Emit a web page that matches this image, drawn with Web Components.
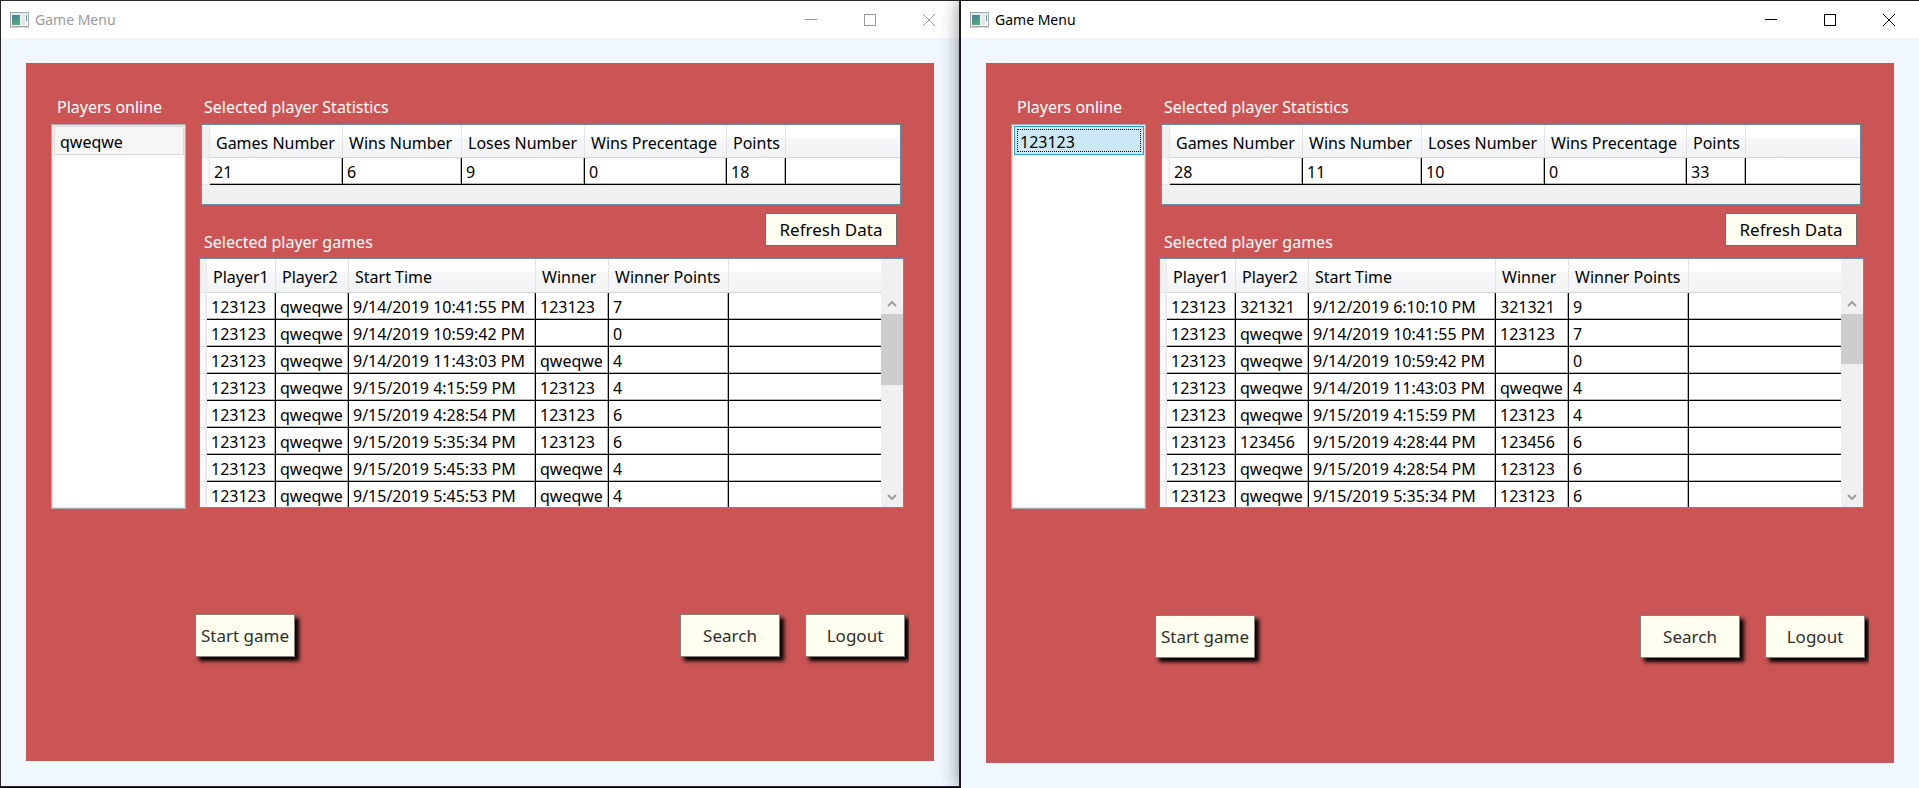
<!DOCTYPE html>
<html lang="en">
<head>
<meta charset="utf-8">
<title>Game Menu</title>
<style>
  html, body { margin: 0; }
  body {
    display: flex;
    min-height: 100vh;
    background: #000;
    color: #000;
    font: 16px/24px "Noto Sans", "Open Sans", sans-serif;
  }
</style>
</head>
<body>
<app-window heading="Game Menu"><game-menu session="first"></game-menu></app-window>
<app-window heading="Game Menu" active><game-menu session="second"></game-menu></app-window>

<script>
const sessions = {
  first: {
    players: ["qweqwe"],
    focused: false,
    stats: ["21", "6", "9", "0", "18"],
    thumb: 71,
    games: [
      ["123123", "qweqwe", "9/14/2019 10:41:55 PM", "123123", "7"],
      ["123123", "qweqwe", "9/14/2019 10:59:42 PM", "", "0"],
      ["123123", "qweqwe", "9/14/2019 11:43:03 PM", "qweqwe", "4"],
      ["123123", "qweqwe", "9/15/2019 4:15:59 PM", "123123", "4"],
      ["123123", "qweqwe", "9/15/2019 4:28:54 PM", "123123", "6"],
      ["123123", "qweqwe", "9/15/2019 5:35:34 PM", "123123", "6"],
      ["123123", "qweqwe", "9/15/2019 5:45:33 PM", "qweqwe", "4"],
      ["123123", "qweqwe", "9/15/2019 5:45:53 PM", "qweqwe", "4"]
    ]
  },
  second: {
    players: ["123123"],
    focused: true,
    stats: ["28", "11", "10", "0", "33"],
    thumb: 50,
    games: [
      ["123123", "321321", "9/12/2019 6:10:10 PM", "321321", "9"],
      ["123123", "qweqwe", "9/14/2019 10:41:55 PM", "123123", "7"],
      ["123123", "qweqwe", "9/14/2019 10:59:42 PM", "", "0"],
      ["123123", "qweqwe", "9/14/2019 11:43:03 PM", "qweqwe", "4"],
      ["123123", "qweqwe", "9/15/2019 4:15:59 PM", "123123", "4"],
      ["123123", "123456", "9/15/2019 4:28:44 PM", "123456", "6"],
      ["123123", "qweqwe", "9/15/2019 4:28:54 PM", "123123", "6"],
      ["123123", "qweqwe", "9/15/2019 5:35:34 PM", "123123", "6"]
    ]
  }
};

/* Desktop window: title bar, caption buttons and a client area */
class AppWindow extends HTMLElement {
  connectedCallback() {
    this.attachShadow({ mode: "open" }).innerHTML = `
      <style>
        :host {
          display: flex; flex-direction: column; flex: 1 1 0; min-width: 0;
          box-sizing: content-box;
          margin-bottom: 1px;
          border: 1px solid #2b282c;
          background: #f0f7ff;
          --ink: #999;
        }
        :host([active]) {
          --ink: #000;
          margin-bottom: 0;
          border-color: #1a171b; border-right: 0; border-bottom: 0;
          box-shadow: 0 0 18px rgba(0, 0, 0, .5);
        }
        header { display: flex; align-items: center; height: 37px; padding-right: 1px; background: #fff; color: var(--ink); }
        .icon { margin: 0 6px 0 9px; }
        h1 { margin: 0; flex: 1; font-size: 14px; line-height: 20px; font-weight: 400; }
        button {
          display: flex; align-items: center; justify-content: center;
          width: 59px; height: 36px; padding: 0; border: 0; background: none; color: inherit;
        }
        button svg { fill: none; stroke: currentColor; }
        main { display: flex; flex: 1; padding: 25px; }
        ::slotted(*) { flex: 1; min-width: 0; }
      </style>
      <header>
        <svg class="icon" width="19" height="16" viewBox="0 0 19 16" aria-hidden="true">
          <defs><linearGradient id="g" x2="0.6" y2="1"><stop stop-color="#4478a0"/><stop offset="1" stop-color="#54ad78"/></linearGradient></defs>
          <rect x=".5" y=".5" width="18" height="14" fill="#f3f4f5" stroke="#a3a9ae"/>
          <path d="M0 15.5h19" stroke="#d4d6d8"/>
          <path d="M1 1.5h17" stroke="#dfe2e4"/>
          <rect x="2" y="3" width="8" height="10" fill="url(#g)"/>
          <rect x="11" y="3" width="4" height="10" fill="#e6e8e9"/>
          <path d="M16.5 3v6" stroke="#5d9c9b"/>
        </svg>
        <h1></h1>
        <button type="button" aria-label="Minimize"><svg width="12" height="12"><path d="M0 5.5h12"/></svg></button>
        <button type="button" aria-label="Maximize"><svg width="12" height="12"><rect x=".5" y=".5" width="11" height="11"/></svg></button>
        <button type="button" aria-label="Close"><svg width="12" height="12"><path d="M0 0l12 12M12 0L0 12"/></svg></button>
      </header>
      <main><slot></slot></main>`;
    this.shadowRoot.querySelector("h1").textContent = this.getAttribute("heading");
  }
}

/* Push button; the raised kind is larger and casts a shadow */
class PushButton extends HTMLElement {
  connectedCallback() {
    this.attachShadow({ mode: "open" }).innerHTML = `
      <style>
        :host { display: block; }
        button {
          display: block; box-sizing: border-box; width: 132px; height: 33px; padding: 0;
          border: 1px solid #707070; background: #fffff0; color: #000;
          font: inherit; font-size: 17px; white-space: nowrap;
        }
        :host([raised]) button {
          width: 100px; height: 43px; padding-top: 2px; color: #2e2e2c;
          border-color: #85807a;
          box-shadow: 4px 4px 4px #000;
        }
      </style>
      <button type="button"><slot></slot></button>`;
  }
}

/* List of online players */
class PlayerList extends HTMLElement {
  set players(names) {
    this.attachShadow({ mode: "open" }).innerHTML = `
      <style>
        :host { display: block; }
        ul {
          box-sizing: border-box; height: 100%; margin: 0; padding: 1px 1px 1px 2px; list-style: none;
          border: 1px solid #abadb3; background: #fff; box-shadow: inset 0 0 0 1px #efdede;
        }
        li {
          box-sizing: border-box; height: 29px; padding: 1px 5px 0;
          border: 1px solid #dadada; background: #f6f6f6; line-height: 28px;
        }
        :host([focused]) li {
          border-color: #26a0da; background: #cbe8f6;
          outline: 1px dotted #000; outline-offset: -4px;
        }
      </style>
      <ul role="listbox" aria-label="Players online">${
        names.map(n => `<li role="option" aria-selected="true">${n}</li>`).join("")
      }</ul>`;
  }
}

/* Data grid with row headers, a filler column and an optional scroll bar */
class DataGrid extends HTMLElement {
  set data({ label, columns, rows, thumb }) {
    this.attachShadow({ mode: "open" }).innerHTML = `
      <style>
        :host {
          display: flex; align-items: stretch; box-sizing: border-box; overflow: hidden;
          border: 1px solid #688caf; background: #f0f0f0;
        }
        .view { flex: 1; min-width: 0; }
        table { width: 100%; table-layout: fixed; border-collapse: separate; border-spacing: 0; }
        th, td { box-sizing: border-box; padding: 0; text-align: left; font-weight: 400; white-space: nowrap; }
        thead th, thead td {
          height: var(--head, 33px); line-height: 26px; padding: 3px 0 0 6px;
          border-bottom: 1px solid #d5d5d5; border-right: 1px solid #e4e4e6;
          background: linear-gradient(#fff 40%, #f7f8fa 40%, #f1f2f4);
        }
        thead .corner { background: #f0f0f0; border-color: #e6e6e6; padding: 0; }
        thead .rest { border-right: 0; }
        tbody td {
          height: 27px; line-height: 24px; padding: 2px 0 0 4px; background: #fff;
          border-right: 1px solid #000; border-bottom: 1px solid #000;
          box-shadow: inset -1px -1px #b4b4b4;
        }
        tbody .rest { border-right: 0; box-shadow: inset 0 -1px #b4b4b4; }
        tbody .corner { padding: 0; border-color: #e4e4e4; box-shadow: none; background: linear-gradient(90deg, #fff, #f3f4f5); }
        .bar { display: flex; flex-direction: column; width: 22px; padding-top: 34px; background: #f0f0f0; }
        .bar button { display: flex; align-items: center; justify-content: center; width: 22px; height: 21px; padding: 0; border: 0; background: none; }
        .bar svg { fill: none; stroke: #a0a0a0; stroke-width: 2; }
        .track { flex: 1; }
        .thumb { height: ${thumb || 0}px; background: #cdcdcd; }
      </style>
      <div class="view">
        <table aria-label="${label}">
          <colgroup><col style="width:var(--corner, 8px)">${columns.map(c => `<col style="width:${c[1]}px">`).join("")}<col></colgroup>
          <thead><tr><td class="corner"></td>${columns.map(c => `<th scope="col">${c[0]}</th>`).join("")}<td class="rest"></td></tr></thead>
          <tbody>${rows.map(r => `<tr><td class="corner"></td>${r.map(v => `<td>${v}</td>`).join("")}<td class="rest"></td></tr>`).join("")}</tbody>
        </table>
      </div>
      ${thumb ? `<div class="bar">
        <button type="button" aria-label="Scroll up"><svg width="10" height="8"><path d="M1 6l4-4 4 4"/></svg></button>
        <div class="track"><div class="thumb"></div></div>
        <button type="button" aria-label="Scroll down"><svg width="10" height="8"><path d="M1 2l4 4 4-4"/></svg></button>
      </div>` : ""}`;
  }
}

/* Client area of the game menu */
class GameMenu extends HTMLElement {
  connectedCallback() {
    const s = sessions[this.getAttribute("session")];
    const root = this.attachShadow({ mode: "open" });
    root.innerHTML = `
      <style>
        :host { display: flex; flex-direction: column; background: #cb5555; padding: 32px 25px 0; }
        h2 { margin: 0; font: inherit; color: #fff; }
        .top { display: grid; grid-template-columns: 135px 1fr; column-gap: 13px; }
        .players { display: flex; flex-direction: column; }
        .players h2 { padding: 0 0 5px 6px; }
        player-list { flex: 1; }
        .data { padding: 0 5px 1px 0; }
        .data h2 { padding: 0 0 5px 5px; }
        .stats { height: 81px; margin: 0 3px 0 2px; }
        .row { display: flex; justify-content: space-between; align-items: flex-end; height: 45px; padding: 8px 7px 0 0; }
        .data .row h2 { padding-bottom: 4px; }
        .row push-button { align-self: flex-start; }
        .games { height: 250px; --head: 34px; --corner: 7px; }
        footer { display: flex; margin: auto 0; padding: 0 4px 0 144px; overflow-x: clip; }
        footer .gap { flex: 1; }
        footer push-button + push-button { margin-left: 25px; }
      </style>
      <div class="top">
        <section class="players"><h2>Players online</h2><player-list></player-list></section>
        <section class="data">
          <h2>Selected player Statistics</h2>
          <data-grid class="stats"></data-grid>
          <div class="row"><h2>Selected player games</h2><push-button>Refresh Data</push-button></div>
          <data-grid class="games"></data-grid>
        </section>
      </div>
      <footer>
        <push-button raised>Start game</push-button>
        <span class="gap"></span>
        <push-button raised>Search</push-button><push-button raised>Logout</push-button>
      </footer>`;
    const list = root.querySelector("player-list");
    list.players = s.players;
    list.toggleAttribute("focused", s.focused);
    root.querySelector(".stats").data = {
      label: "Selected player Statistics",
      columns: [["Games Number", 133], ["Wins Number", 119], ["Loses Number", 123], ["Wins Precentage", 142], ["Points", 59]],
      rows: [s.stats]
    };
    root.querySelector(".games").data = {
      label: "Selected player games",
      columns: [["Player1", 69], ["Player2", 73], ["Start Time", 187], ["Winner", 73], ["Winner Points", 120]],
      rows: s.games,
      thumb: s.thumb
    };
  }
}

customElements.define("push-button", PushButton);
customElements.define("player-list", PlayerList);
customElements.define("data-grid", DataGrid);
customElements.define("game-menu", GameMenu);
customElements.define("app-window", AppWindow);
</script>
</body>
</html>
